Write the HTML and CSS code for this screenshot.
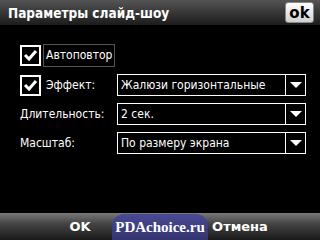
FILE: index.html
```html
<!DOCTYPE html>
<html lang="ru">
<head>
    <meta charset="UTF-8">
    <title>Параметры слайд-шоу</title>
    <link rel="stylesheet" href="styles.css">
</head>
<body>
    <div class="titlebar">
        <span class="title">Параметры слайд-шоу</span>
        <button class="ok-btn">ok</button>
    </div>

    <div class="content">
        <div class="row">
            <span class="check"><svg width="15" height="13" viewBox="0 0 15 13"><path d="M2 6 L6 10 L13 2" fill="none" stroke="#fff" stroke-width="3"/></svg></span>
            <span class="label focused">Автоповтор</span>
        </div>
        <div class="row">
            <div class="field-label">
                <span class="check"><svg width="15" height="13" viewBox="0 0 15 13"><path d="M2 6 L6 10 L13 2" fill="none" stroke="#fff" stroke-width="3"/></svg></span>
                <span class="label">Эффект:</span>
            </div>
            <div class="select">
                <span class="value">Жалюзи горизонтальные</span>
                <span class="arrow"></span>
            </div>
        </div>
        <div class="row">
            <div class="field-label">Длительность:</div>
            <div class="select">
                <span class="value">2 сек.</span>
                <span class="arrow"></span>
            </div>
        </div>
        <div class="row">
            <div class="field-label">Масштаб:</div>
            <div class="select">
                <span class="value">По размеру экрана</span>
                <span class="arrow"></span>
            </div>
        </div>
    </div>

    <div class="menubar">
        <span class="softkey">OK</span>
        <span class="softkey">Отмена</span>
        <span class="watermark">PDAchoice.ru</span>
    </div>
</body>
</html>
```

FILE: styles.css
```css
body {
    margin: 0;
    width: 320px;
    height: 240px;
    background-color: #000;
    color: #fff;
    font-family: "DejaVu Sans Condensed", "DejaVu Sans", sans-serif;
    font-size: 12px;
    display: flex;
    flex-direction: column;
    overflow: hidden;
}
.titlebar {
    height: 25px;
    display: flex;
    align-items: center;
    justify-content: space-between;
    padding: 0 6px 0 8px;
    background: linear-gradient(#555 0%, #3a3a3a 45%, #1c1c1c 100%);
}
.title {
    font-weight: bold;
    font-size: 13.5px;
}
.ok-btn {
    width: 29px;
    height: 21px;
    padding: 0;
    border: 1px solid #888;
    border-radius: 3px;
    background: linear-gradient(#fff, #d0d0d0);
    color: #000;
    font-family: "DejaVu Sans", sans-serif;
    font-weight: bold;
    font-size: 15px;
    line-height: 18px;
}
.content {
    flex: 1;
    padding: 19px 14px 0 20px;
    display: flex;
    flex-direction: column;
    gap: 7px;
}
.row {
    height: 22px;
    display: flex;
    align-items: center;
}
.row:first-child {
    height: 23px;
}
.check {
    width: 17px;
    height: 17px;
    border: 2px solid #fff;
    display: flex;
    align-items: center;
    justify-content: center;
}
.label {
    margin-left: 2px;
    padding: 2px 2px;
    border: 1px solid transparent;
}
.label.focused {
    border-color: #555;
    height: 17px;
    line-height: 17px;
}
.field-label {
    width: 97px;
    display: flex;
    align-items: center;
}
.select {
    flex: 1;
    height: 20px;
    border: 1px solid #fff;
    display: flex;
}
.value {
    flex: 1;
    padding-left: 3px;
    line-height: 20px;
}
.arrow {
    width: 19px;
    border-left: 1px solid #fff;
    position: relative;
}
.arrow::after {
    content: "";
    position: absolute;
    left: 4px;
    top: 7px;
    border-left: 6px solid transparent;
    border-right: 6px solid transparent;
    border-top: 6px solid #fff;
}
.menubar {
    height: 27px;
    display: flex;
    align-items: center;
    background: linear-gradient(#7a7a7a 0%, #444 40%, #1a1a1a 100%);
    position: relative;
}
.softkey {
    flex: 1;
    text-align: center;
    font-family: "DejaVu Sans", sans-serif;
    font-weight: bold;
    font-size: 13px;
}
.watermark {
    position: absolute;
    left: 112px;
    top: 1px;
    width: 96px;
    height: 26px;
    line-height: 26px;
    border-radius: 12px 12px 0 0;
    background: linear-gradient(#4a4a94, #33336e);
    text-align: center;
    font-family: "Liberation Serif", serif;
    font-weight: bold;
    font-size: 15px;
}
```
